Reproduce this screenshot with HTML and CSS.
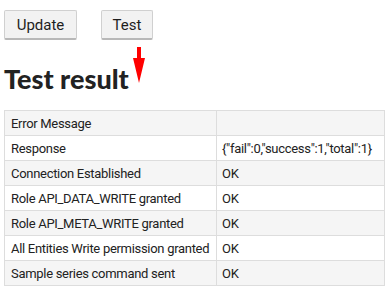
FILE: index.html
```html
<!DOCTYPE html>
<html>
<head>
<meta charset="utf-8">
<link rel="stylesheet" href="styles.css">
</head>
<body>
<div class="page">
  <div class="actions">
    <button class="btn btn-update">Update</button>
    <button class="btn btn-test">Test</button>
  </div>
  <h1 class="title">Test result</h1>
  <svg class="arrow" width="12" height="37" viewBox="0 0 12 37">
    <polygon points="4,0 8,0 8,11 12,11 6,36 0,11 4,11" fill="#ff0000"/>
  </svg>
  <table class="result">
    <colgroup><col class="col-key"><col class="col-val"></colgroup>
    <tr><td class="key">Error Message</td><td class="val"></td></tr>
    <tr><td class="key">Response</td><td class="val">{"fail":0,"success":1,"total":1}</td></tr>
    <tr><td class="key">Connection Established</td><td class="val">OK</td></tr>
    <tr><td class="key">Role API_DATA_WRITE granted</td><td class="val">OK</td></tr>
    <tr><td class="key">Role API_META_WRITE granted</td><td class="val">OK</td></tr>
    <tr><td class="key">All Entities Write permission granted</td><td class="val">OK</td></tr>
    <tr><td class="key">Sample series command sent</td><td class="val">OK</td></tr>
  </table>
</div>
</body>
</html>
```
FILE: styles.css
```css
html, body {
  margin: 0;
  padding: 0;
  background: #ffffff;
}
body {
  font-family: Roboto, "Noto Sans", sans-serif;
  color: #222222;
}
.page {
  position: relative;
  padding: 10px 4px 0 4px;
}
.actions {
  display: flex;
  gap: 24px;
}
.btn {
  font-family: Roboto, "Noto Sans", sans-serif;
  font-size: 15px;
  color: #1e1e1e;
  background: #f2f2f2;
  border: 1px solid #d0d0d0;
  border-bottom: 2px solid #b8b8b8;
  border-radius: 2px;
  height: 30px;
  padding: 0;
  margin: 0;
}
.btn-update { width: 73px; }
.btn-test { width: 52px; }
.title {
  font-family: Lato, Roboto, sans-serif;
  font-size: 27px;
  font-weight: 900;
  margin: 24px 0 0 0;
  line-height: 30px;
  color: #222222;
}
.arrow {
  position: absolute;
  left: 133px;
  top: 47px;
}
.result {
  margin-top: 16px;
  width: 381px;
  border-collapse: collapse;
  table-layout: fixed;
  font-size: 13px;
  letter-spacing: -0.3px;
}
.col-key { width: 212px; }
.result td {
  border: 1px solid #dddddd;
  height: 25px;
  padding: 0 6px;
  box-sizing: border-box;
  white-space: nowrap;
  overflow: hidden;
}
.result td.val {
  padding-left: 5px;
}
.result tr:nth-child(odd) td {
  background: #f5f5f5;
}
```
